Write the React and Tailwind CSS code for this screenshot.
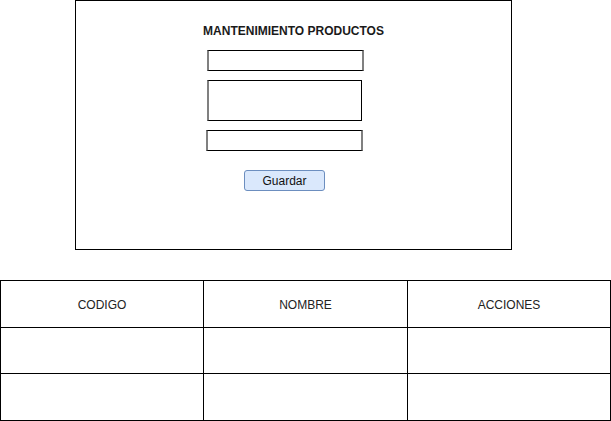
export default function App() {
  const font = { fontFamily: '"Liberation Sans", Arial, Helvetica, sans-serif' };
  return (
    <div className="w-[611px] h-[421px] bg-white overflow-hidden" style={font}>
      <div className="ml-[75px] w-[437px] h-[250px] border border-black flex flex-col items-start">
        <div className="w-full text-center text-[12px] leading-[14px] font-bold text-[#1a1a1a] mt-[23px]">
          MANTENIMIENTO PRODUCTOS
        </div>
        <div className="ml-[131px] mt-[12px] w-[157px] h-[21px] border-y border-black border-x-2 border-x-[#808080] bg-white"></div>
        <div className="ml-[131px] mt-[9px] w-[155px] h-[41px] border-y border-r border-black border-l-2 border-l-[#808080] bg-white"></div>
        <div className="ml-[130px] mt-[9px] w-[157px] h-[21px] border-y border-black border-x-2 border-x-[#808080] bg-white"></div>
        <div className="ml-[168px] mt-[19px] w-[81px] h-[21px] rounded-[3px] border border-[#6c8ebf] bg-[#dae8fc] flex items-center justify-center text-[12px] text-[#111]">
          Guardar
        </div>
      </div>
      <div className="mt-[30px] grid grid-cols-[203px_204px_203px] grid-rows-[47px_46px_47px] border-l border-t border-black w-[611px]">
        {["CODIGO", "NOMBRE", "ACCIONES"].map((h) => (
          <div key={h} className="border-r border-b border-black flex items-center justify-center pt-[1px] text-[12px] text-[#222]">
            {h}
          </div>
        ))}
        {[0, 1, 2, 3, 4, 5].map((i) => (
          <div key={i} className="border-r border-b border-black"></div>
        ))}
      </div>
    </div>
  );
}
